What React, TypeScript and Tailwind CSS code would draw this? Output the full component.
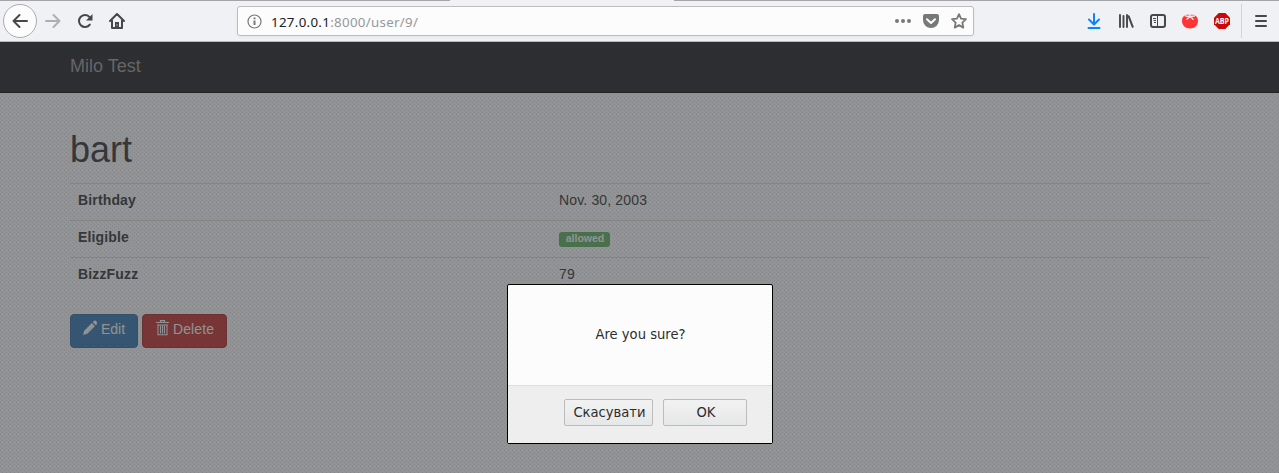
import React from "react";

const TEXTURE =
  "bg-[image:conic-gradient(from_270deg_at_1px_1px,rgba(24,28,40,0.1)_90deg,transparent_0),conic-gradient(from_270deg_at_1px_1px,rgba(24,28,40,0.1)_90deg,transparent_0)] bg-[length:4px_4px] bg-[position:0_0,2px_2px]";

function Toolbar() {
  return (
    <header className="relative flex h-[42px] shrink-0 items-center border-t border-b border-t-[#a5a5a8] border-b-[#b8b8ba] bg-[#f0f1f4] text-[#45484a]">
      <div className="absolute -top-px left-[450px] h-px w-[224px] bg-[#f0f1f4]" />
      <div className="ml-[3px] flex size-[34px] items-center justify-center rounded-full border border-[#acacae] bg-[#fcfcfc]">
        <svg width="16" height="16" viewBox="0 0 16 16" fill="none" stroke="currentColor" strokeWidth="2" strokeLinecap="round" strokeLinejoin="round">
          <path d="M15 8H1.500M7.500 2L1.500 8l6 6" />
        </svg>
      </div>
      <svg className="ml-2 text-[#aeafb1]" width="16" height="16" viewBox="0 0 16 16" fill="none" stroke="currentColor" strokeWidth="2" strokeLinecap="round" strokeLinejoin="round">
        <path d="M1 8h13.500M8.500 2l6 6-6 6" />
      </svg>
      <svg className="ml-4" width="16" height="16" viewBox="0 0 16 16" fill="none" stroke="currentColor" strokeWidth="2" strokeLinecap="round">
        <path d="M12.800 11.600A6 6 0 1 1 12.200 3.700" />
        <path d="M15.500 1v6.500H9z" fill="currentColor" stroke="none" />
      </svg>
      <svg className="ml-4" width="16" height="16" viewBox="0 0 16 16" fill="none" stroke="currentColor" strokeWidth="2" strokeLinecap="round" strokeLinejoin="round">
        <path d="M1 8l7-7 7 7M3 7.500V15h10V7.500" />
        <path d="M6 15V9h4v6z" fill="currentColor" stroke="none" />
        <path d="M8 11.500v1" stroke="#f0f1f4" strokeWidth="1" strokeLinecap="butt" />
      </svg>
      <div className="ml-[112px] flex h-[30px] w-[737px] items-center rounded-[3px] border border-[#bdbdbf] bg-[#fcfcfc] pl-[9px] shadow-[0_1px_3px_rgba(0,0,0,0.05)]">
        <svg width="15" height="15" viewBox="0 0 15 15" fill="none" stroke="#777879">
          <circle cx="7.500" cy="7.500" r="6.500" strokeWidth="1.200" />
          <path d="M7.500 6.500V11M7.500 3.500v1.800" strokeWidth="2" />
        </svg>
        <span className="ml-[9px] pt-[2px] font-['Noto_Sans',sans-serif] text-[13.333px] leading-[18px] tracking-[0.3px] text-[#202124]">
          127.0.0.1<span className="text-[#97989a]">:8000/user/9/</span>
        </span>
        <div className="ml-auto flex items-center gap-3 pr-[6px] text-[#777979]">
          <svg width="16" height="16" viewBox="0 0 16 16" fill="currentColor">
            <circle cx="2" cy="8" r="2" /><circle cx="8" cy="8" r="2" /><circle cx="14" cy="8" r="2" />
          </svg>
          <svg width="16" height="16" viewBox="0 0 16 16">
            <path d="M2 1h12a2 2 0 0 1 2 2v4a8 8 0 0 1-16 0V3a2 2 0 0 1 2-2z" fill="currentColor" />
            <path d="M4 6.200l4 3.800 4-3.800" fill="none" stroke="#fcfcfc" strokeWidth="2" strokeLinecap="round" strokeLinejoin="round" />
          </svg>
          <svg width="16" height="16" viewBox="0 0 16 16" fill="none" stroke="currentColor" strokeWidth="1.800" strokeLinejoin="round">
            <path d="M8 1.100l2.050 4.500 4.900.600-3.600 3.400.950 5L8 12.100l-4.300 2.500.950-5-3.600-3.400 4.900-.600z" />
          </svg>
        </div>
      </div>
      <div className="ml-auto flex items-center gap-4 pr-3">
        <svg width="16" height="16" viewBox="0 0 16 16" fill="none" stroke="#0a84ff" strokeWidth="2" strokeLinecap="round" strokeLinejoin="round">
          <path d="M8 1v10M3 6.500L8 11.500l5-5" /><path d="M2.500 15h11" />
        </svg>
        <svg width="16" height="16" viewBox="0 0 16 16" fill="none" stroke="currentColor" strokeWidth="2" strokeLinecap="round">
          <path d="M2 2v12M5.500 3v11M9 2v12" strokeWidth="1.900" /><path d="M10.700 3.300l4 10.500" />
        </svg>
        <svg width="16" height="16" viewBox="0 0 16 16" fill="none" stroke="currentColor">
          <rect x="1" y="2" width="14" height="12" rx="2" strokeWidth="2" />
          <path d="M7.500 3v10" strokeWidth="1" />
          <path d="M3 5.500h3M3.500 7.500H6M4 9.500h2" strokeWidth="1" />
        </svg>
        <svg width="16" height="16" viewBox="0 0 16 16">
          <path d="M8 2C3 1 0 3.500 0 8c0 4.500 3.500 7.500 8 7.500s8-3 8-7.500c0-4.500-3-7-8-6z" fill="#ff3434" />
          <path d="M8 .5v4M8 3.500L3.500 3M8 3.500L12.500 3M7.500 3.500L5 6.200M8.500 3.500L11 6.200" stroke="#fbe4e4" strokeWidth="1.400" fill="none" strokeLinecap="round" />
        </svg>
        <svg className="overflow-visible" width="16" height="16" viewBox="0 0 16 16">
          <path d="M4.700 0h6.600L16 4.700v6.600L11.300 16H4.700L0 11.300V4.700z" fill="#cb0808" />
          <text x="1" y="11" fill="#fff" fontSize="8.500" fontWeight="700" fontFamily="Open Sans, sans-serif" textLength="14" lengthAdjust="spacingAndGlyphs">ABP</text>
        </svg>
        <div className="-ml-[5px] h-[34px] w-px bg-[#d2d3d6]" />
        <svg className="-ml-[3px]" width="12" height="14" viewBox="0 0 12 14" stroke="currentColor" strokeWidth="2" strokeLinecap="round">
          <path d="M1 2h10M1 7h10M1 12h10" />
        </svg>
      </div>
    </header>
  );
}

const rows: { label: string; value: React.ReactNode }[] = [
  { label: "Birthday", value: "Nov. 30, 2003" },
  {
    label: "Eligible",
    value: (
      <span className="mt-[5px] flex h-[15px] w-[51px] items-center justify-center rounded-[3px] bg-[#5cb85c] pb-[2px] pl-px text-[10.500px] leading-none font-bold tracking-normal text-white">
        allowed
      </span>
    ),
  },
  { label: "BizzFuzz", value: "79" },
];

function Page() {
  return (
    <div className="flex h-full flex-col bg-white font-['Liberation_Sans',sans-serif] text-sm leading-5 text-[#333333]">
      <nav className="h-[51px] shrink-0 border-b border-[#080808] bg-[#222222] pl-[70px]">
        <div className="pt-[14px] text-lg leading-5 text-[#9d9d9d]">Milo Test</div>
      </nav>
      <main className="ml-[70px] w-[1140px]">
        <h1 className="mt-[37px] mb-[13px] text-4xl leading-10 font-normal">bart</h1>
        <div className="tracking-[0.15px]">
          {rows.map((row) => (
            <div key={row.label} className="flex h-[37px] border-t border-[#dddddd] px-2 pt-[6px]">
              <div className="w-[481px] font-bold">{row.label}</div>
              <div>{row.value}</div>
            </div>
          ))}
        </div>
        <div className="mt-5 flex gap-1 text-white">
          <button className="flex h-[34px] w-[68px] items-start rounded border border-[#2e6da4] bg-[#337ab7] pt-[5px] pl-3">
            <svg className="mr-1" width="14" height="16" viewBox="0 0 14 16" fill="currentColor">
              <path d="M0 15l1.200-4.300L8.800 3.100l3.100 3.100-7.600 7.600zM9.700 2.200l1.500-1.500a1 1 0 0 1 1.400 0l1.700 1.700a1 1 0 0 1 0 1.400l-1.500 1.500z" />
            </svg>
            <span className="leading-[18px]">Edit</span>
          </button>
          <button className="flex h-[34px] w-[85px] items-start rounded border border-[#ac2925] bg-[#c9302c] pt-[5px] pl-[13px]">
            <svg className="mr-1" width="13" height="16" viewBox="0 0 13 16" fill="none" stroke="currentColor">
              <path d="M0 2.500h13M4.500 2V.600h4V2M1.500 5h10" strokeWidth="1.200" />
              <path d="M2 4.500v10.200h9V4.500M4.500 5.500v8M6.500 5.500v8M8.500 5.500v8" strokeWidth="1.100" />
            </svg>
            <span className="leading-[18px] tracking-[0.1px]">Delete</span>
          </button>
        </div>
      </main>
    </div>
  );
}

function ConfirmDialog() {
  const button =
    "h-[27px] rounded-[2px] border border-[#bcbcbd] bg-linear-to-b from-[#f2f2f2] to-[#e6e7e8] pb-px pl-[2px] text-center leading-[24px]";
  return (
    <div className="absolute top-[242px] left-[507px] flex h-[160px] w-[266px] flex-col overflow-hidden rounded-[2px] border border-black bg-[#fcfcfc] font-['DejaVu_Sans_Condensed','DejaVu_Sans',sans-serif] text-[14.600px] font-stretch-condensed text-[#2b2d2e]">
      <div className="flex h-[100px] items-center justify-center pb-[3px] pl-px">Are you sure?</div>
      <div className="flex flex-1 gap-[10px] border-t border-[#dddddd] bg-[#eeeeee] pt-[13px] pl-[56px]">
        <button className={`${button} w-[89px]`}>Скасувати</button>
        <button className={`${button} w-[84px]`}>OK</button>
      </div>
    </div>
  );
}

export default function App() {
  return (
    <div className="flex h-[473px] w-[1279px] flex-col overflow-hidden">
      <Toolbar />
      <div className="relative min-h-0 flex-1">
        <Page />
        <div className={`absolute inset-0 bg-[rgba(57,58,60,0.55)] ${TEXTURE}`} />
        <ConfirmDialog />
      </div>
    </div>
  );
}
